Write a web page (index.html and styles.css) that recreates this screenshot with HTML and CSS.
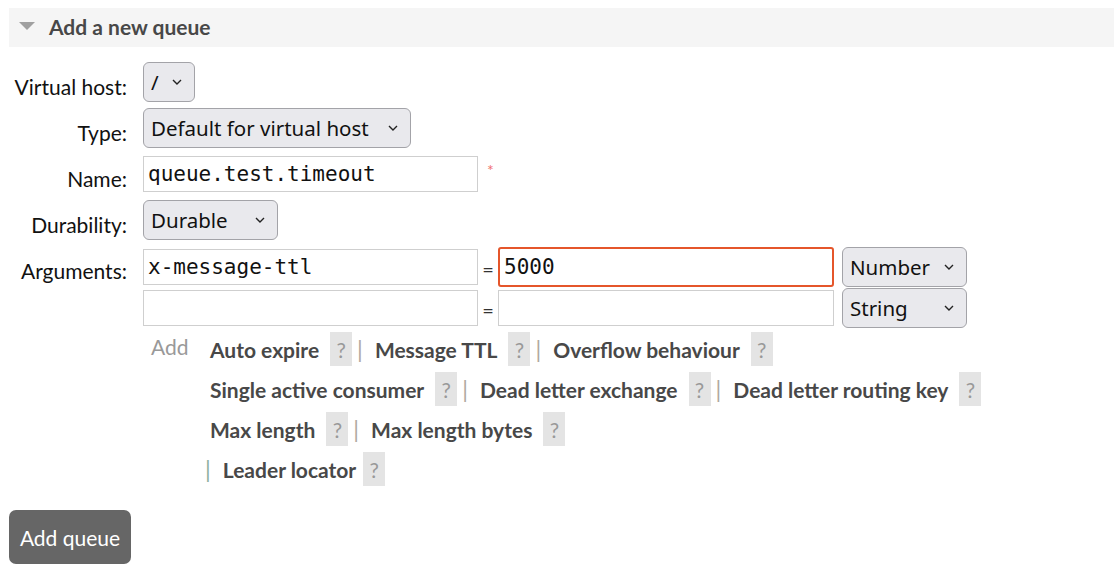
FILE: index.html
```html
<!DOCTYPE html>
<html>
<head>
<meta charset="utf-8">
<link rel="stylesheet" href="styles.css">
</head>
<body>
<div class="section">
  <div class="section-head">
    <svg class="tri" width="16" height="10" viewBox="0 0 16 10"><polygon points="0,1 16,1 8,9" fill="#a0a0a0"/></svg>
    <h2>Add a new queue</h2>
  </div>
  <form class="form">
    <label class="lbl">Virtual host:</label>
    <div class="cell">
      <span class="sel w-vhost"><select><option>/</option></select><svg class="chev" width="10" height="6" viewBox="0 0 10 6"><polyline points="1,1 5,5 9,1" fill="none" stroke="#222" stroke-width="1.4"/></svg></span>
    </div>

    <label class="lbl">Type:</label>
    <div class="cell">
      <span class="sel w-type"><select><option>Default for virtual host</option></select><svg class="chev" width="10" height="6" viewBox="0 0 10 6"><polyline points="1,1 5,5 9,1" fill="none" stroke="#222" stroke-width="1.4"/></svg></span>
    </div>

    <label class="lbl">Name:</label>
    <div class="cell">
      <input class="txt w-name" type="text" value="queue.test.timeout"><span class="req">*</span>
    </div>

    <label class="lbl">Durability:</label>
    <div class="cell">
      <span class="sel w-dur"><select><option>Durable</option></select><svg class="chev" width="10" height="6" viewBox="0 0 10 6"><polyline points="1,1 5,5 9,1" fill="none" stroke="#222" stroke-width="1.4"/></svg></span>
    </div>

    <label class="lbl">Arguments:</label>
    <div class="cell args">
      <div class="arg-row">
        <input class="txt w-key" type="text" value="x-message-ttl">
        <span class="eq">=</span>
        <input class="txt w-val focus" type="text" value="5000">
        <span class="sel w-kind"><select><option>Number</option></select><svg class="chev" width="10" height="6" viewBox="0 0 10 6"><polyline points="1,1 5,5 9,1" fill="none" stroke="#222" stroke-width="1.4"/></svg></span>
      </div>
      <div class="arg-row">
        <input class="txt w-key" type="text" value="">
        <span class="eq">=</span>
        <input class="txt w-val" type="text" value="">
        <span class="sel w-kind"><select><option>String</option></select><svg class="chev" width="10" height="6" viewBox="0 0 10 6"><polyline points="1,1 5,5 9,1" fill="none" stroke="#222" stroke-width="1.4"/></svg></span>
      </div>
      <div class="add-block">
        <span class="add">Add</span>
        <div class="links">
          <div class="line">
            <span class="lk">Auto expire</span><span class="help">?</span><span class="sep">|</span>
            <span class="lk">Message TTL</span><span class="help">?</span><span class="sep">|</span>
            <span class="lk">Overflow behaviour</span><span class="help">?</span>
          </div>
          <div class="line">
            <span class="lk">Single active consumer</span><span class="help">?</span><span class="sep">|</span>
            <span class="lk">Dead letter exchange</span><span class="help">?</span><span class="sep">|</span>
            <span class="lk">Dead letter routing key</span><span class="help">?</span>
          </div>
          <div class="line">
            <span class="lk">Max length</span><span class="help">?</span><span class="sep">|</span>
            <span class="lk">Max length bytes</span><span class="help">?</span>
          </div>
          <div class="line indent">
            <span class="sep sep-first">|</span>
            <span class="lk lk-tight">Leader locator</span><span class="help">?</span>
          </div>
        </div>
      </div>
    </div>
  </form>
  <button class="btn" type="button">Add queue</button>
</div>
</body>
</html>
```
FILE: styles.css
```css
html, body {
  background: #ffffff;
}
body {
  margin: 8px 0 0 9px;
  font-family: "Source Sans Pro", "Lato", "Open Sans", sans-serif;
  font-size: 21px;
  color: #111;
}
.section-head {
  display: flex;
  align-items: center;
  height: 39px;
  background: #f5f5f5;
  padding-left: 10px;
}
.tri {
  display: block;
  margin-right: 14px;
  margin-top: -4px;
}
.section-head h2 {
  margin: 0;
  margin-top: -2px;
  font-size: 21px;
  font-weight: 700;
  color: #484848;
}
.form {
  display: grid;
  grid-template-columns: 118px auto;
  column-gap: 16px;
  row-gap: 6px;
  margin-top: 15px;
}
.lbl {
  text-align: right;
  line-height: 28px;
  padding-top: 11px;
  color: #111;
}
.cell {
  display: flex;
  align-items: center;
  min-height: 40px;
}
.sel {
  position: relative;
  display: inline-block;
}
.sel select {
  appearance: none;
  -webkit-appearance: none;
  height: 40px;
  box-sizing: border-box;
  border: 1px solid #a3a3a8;
  border-radius: 6px;
  background: #e9e9ed;
  font-family: "Noto Sans", "Open Sans", sans-serif;
  font-size: 20.5px;
  color: #111;
  padding: 0 28px 0 7px;
  width: 100%;
}
.chev {
  position: absolute;
  right: 13px;
  top: 17px;
  pointer-events: none;
}
.w-vhost { width: 52px; }
.w-type { width: 268px; }
.w-dur { width: 135px; }
.w-kind { width: 125px; }
.txt {
  box-sizing: border-box;
  height: 36px;
  border: 1px solid #cfcfcf;
  border-radius: 0;
  padding: 0 4px;
  font-family: "DejaVu Sans Mono", "Liberation Mono", monospace;
  font-size: 21px;
  color: #111;
  background: #fff;
  outline: none;
  margin: 0;
}
.w-name { width: 335px; }
.req {
  color: #f07070;
  font-size: 16px;
  margin-left: 9px;
  align-self: flex-start;
  margin-top: 6px;
}
.args {
  display: block;
}
.arg-row {
  display: flex;
  align-items: center;
  height: 41px;
}
.w-key { width: 335px; }
.w-val { width: 336px; }
.txt.focus {
  height: 40px;
  border: 2px solid #e5562b;
  border-radius: 3px;
  padding: 0 4px;
}
.eq {
  width: 20px;
  text-align: center;
  font-size: 20px;
  color: #333;
  margin-top: 4px;
}
.arg-row .sel {
  margin-left: 8px;
}
.add-block {
  display: flex;
  margin-top: 4px;
}
.add {
  width: 67px;
  padding-left: 8px;
  box-sizing: border-box;
  color: #999;
  line-height: 28px;
  padding-top: 1px;
}
.links {
  display: flex;
  flex-direction: column;
  gap: 6px;
}
.line {
  display: flex;
  align-items: center;
  height: 34px;
}
.line.indent {
  margin-left: -5px;
}
.lk {
  font-weight: 700;
  color: #484848;
  margin-right: 11px;
  white-space: nowrap;
}
.lk-tight {
  margin-right: 7px;
}
.help {
  display: inline-flex;
  align-items: center;
  justify-content: center;
  width: 22px;
  height: 34px;
  background: #e4e4e4;
  color: #999;
}
.sep {
  color: #b0a8a0;
  margin-left: 5px;
  margin-right: 12px;
  font-weight: 400;
  font-size: 23px;
}
.sep-first {
  margin-left: 0;
  color: #8fb0a0;
}
.btn {
  display: block;
  margin-top: 24px;
  width: 122px;
  height: 54px;
  background: #666;
  color: #fff;
  border: none;
  border-radius: 7px;
  font-family: "Source Sans Pro", "Lato", "Open Sans", sans-serif;
  font-size: 21px;
  padding: 0;
}
```
